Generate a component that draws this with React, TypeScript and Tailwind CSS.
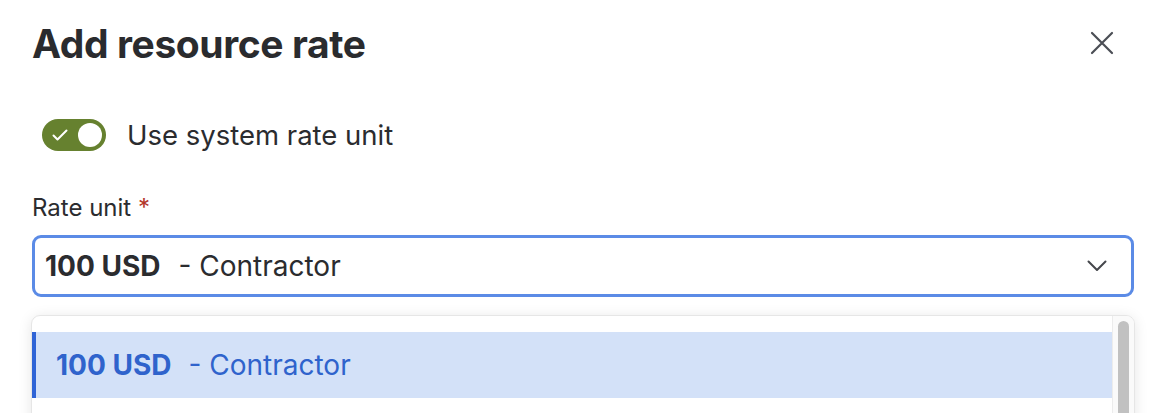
import { useState } from "react";

function CheckIcon() {
  return (
    <svg viewBox="0 0 16 12" className="h-[12px] w-[16px]" fill="none" stroke="white" strokeWidth={2} strokeLinecap="round" strokeLinejoin="round">
      <path d="M1.5 6.5 L5.5 10.5 L14.5 1.5" />
    </svg>
  );
}

function CloseIcon() {
  return (
    <svg viewBox="0 0 24 24" className="h-[24px] w-[24px]" fill="none" stroke="#4b4e55" strokeWidth={2.2} strokeLinecap="round">
      <path d="M2 2 L22 22 M22 2 L2 22" />
    </svg>
  );
}

function ChevronDown() {
  return (
    <svg viewBox="0 0 20 12" className="h-[12px] w-[20px]" fill="none" stroke="#45474c" strokeWidth={2} strokeLinecap="round" strokeLinejoin="round">
      <path d="M1.5 1.5 L10 10 L18.5 1.5" />
    </svg>
  );
}

export default function App() {
  const [useSystem, setUseSystem] = useState(true);

  return (
    <div className="relative h-[413px] overflow-hidden bg-white pl-8 pr-[35px] font-['Inter','Liberation_Sans',sans-serif] text-[#2b2c2f]">
      <div className="flex items-start justify-between pt-[20px]">
        <h1 className="text-[39px] font-bold leading-[48px] tracking-[-0.4px] text-[#2a2b2e]">Add resource rate</h1>
        <button className="mr-[20px] mt-[11px] flex h-[24px] w-[24px] items-center justify-center">
          <CloseIcon />
        </button>
      </div>

      <div className="mt-[51px] flex items-center gap-[21px] pl-[10px]">
        <button
          onClick={() => setUseSystem(!useSystem)}
          className="flex h-[32px] w-[64px] items-center justify-between rounded-full bg-[#66812f] pl-[10px] pr-[4px]"
        >
          <CheckIcon />
          <span className="h-[24px] w-[24px] rounded-full bg-white" />
        </button>
        <span className="text-[27.5px] leading-[32px]">Use system rate unit</span>
      </div>

      <div className="mt-[42px] text-[24px] leading-[30px]">
        Rate unit <span className="text-[#b3362a]">*</span>
      </div>

      <div className="mt-[12px] flex h-[62px] items-center justify-between rounded-[9px] border-[3px] border-[#5b8be6] pl-[10px] pr-[24px] text-[28px]">
        <span>
          <span className="font-bold">100 USD</span>
          <span className="ml-[18px]">- Contractor</span>
        </span>
        <ChevronDown />
      </div>

      <div className="-mx-[1px] mt-[18px] flex h-[120px] overflow-hidden rounded-t-[9px] border border-[#e6e6e6] bg-white shadow-[0_2px_14px_rgba(0,0,0,0.1)]">
        <div className="flex-1 pt-[16px]">
          <div className="flex h-[66px] items-center border-l-[4px] border-[#2f64d6] bg-[#d3e1f8] pl-[20px] text-[28px] text-[#2f63cc]">
            <span className="font-bold">100 USD</span>
            <span className="ml-[17px]">- Contractor</span>
          </div>
        </div>
        <div className="w-[22px] border-l border-[#ececec] bg-[#fafafa] px-[5px] pt-[5px]">
          <div className="h-[120px] rounded-full bg-[#c1c1c1]" />
        </div>
      </div>
    </div>
  );
}
